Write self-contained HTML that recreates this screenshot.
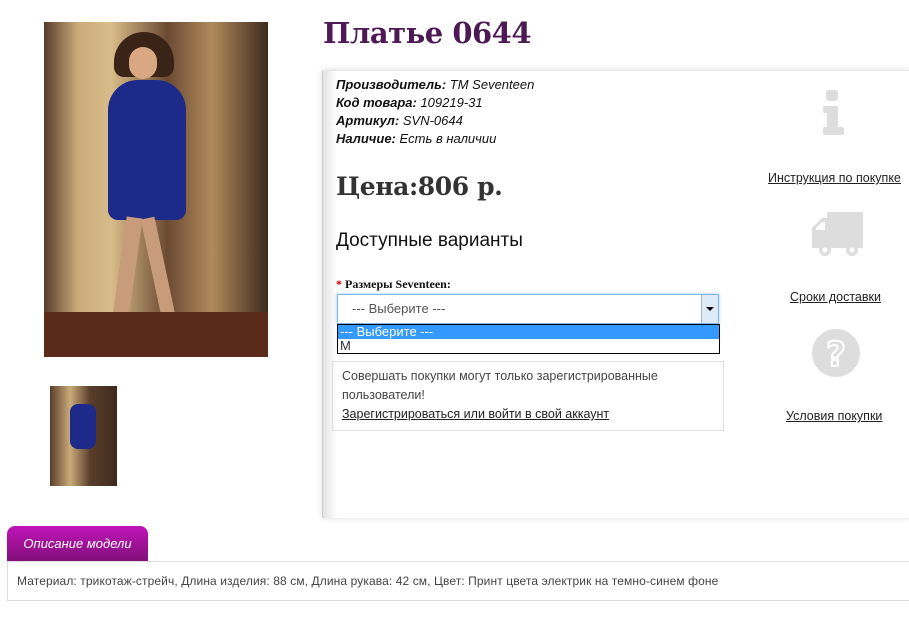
<!DOCTYPE html>
<html><head><meta charset="utf-8"><style>
body{margin:0;width:909px;height:630px;background:#fff;position:relative;overflow:hidden;font-family:"Liberation Sans","DejaVu Sans",sans-serif;color:#333}
.abs{position:absolute}
.photo{left:44px;top:22px;width:224px;height:335px;background:linear-gradient(90deg,#5a3d2a 0%,#c9ab7a 15%,#d8bd8a 30%,#6b4a32 55%,#b08a5c 75%,#3e2a1e 100%)}
.panel{left:322px;top:70px;width:587px;height:447px;background:linear-gradient(90deg,#e2e2e2 0,#fff 14px,#fff 100%);border-top:1px solid #e6e6e6;border-left:1px solid #ccc;box-shadow:0 0 6px #ddd}
.info{left:336px;top:76px;font:italic 13px/18px "Liberation Sans",sans-serif;color:#111}
.info b{font-weight:bold}
a{color:#222;text-decoration:underline}
</style></head><body>
<div class="abs photo">
 <div class="abs" style="left:70px;top:10px;width:60px;height:45px;border-radius:30px 30px 10px 10px;background:#3a2418"></div>
 <div class="abs" style="left:85px;top:25px;width:28px;height:32px;border-radius:14px;background:#d9a882"></div>
 <div class="abs" style="left:64px;top:58px;width:78px;height:140px;border-radius:30px 30px 10px 10px;background:#1e2a8a"></div>
 <div class="abs" style="left:75px;top:195px;width:16px;height:110px;background:#c89b7a;transform:rotate(8deg)"></div>
 <div class="abs" style="left:108px;top:195px;width:14px;height:110px;background:#c89b7a;transform:rotate(-12deg)"></div>
 <div class="abs" style="left:0;top:290px;width:224px;height:45px;background:#5a2a1a"></div>
</div>
<div class="abs" style="left:50px;top:386px;width:67px;height:100px;background:linear-gradient(90deg,#5a3d2a,#c9ab7a 30%,#5a3d2a 60%,#3e2a1e)"><div class="abs" style="left:20px;top:18px;width:26px;height:45px;background:#1e2a8a;border-radius:8px"></div></div>
<div class="abs" style="left:323px;top:12px;font:bold 29px/42px 'DejaVu Serif',serif;color:#4d1a55;letter-spacing:-0.5px">Платье 0644</div>
<div class="abs panel"></div>
<div class="abs info"><b>Производитель:</b> TM Seventeen<br><b>Код товара:</b> 109219-31<br><b>Артикул:</b> SVN-0644<br><b>Наличие:</b> Есть в наличии</div>
<div class="abs" style="left:336px;top:169px;font:bold 25px/36px 'DejaVu Serif',serif;color:#333;letter-spacing:-0.4px">Цена:806 р.</div>
<div class="abs" style="left:336px;top:228px;font:19px/26px 'Liberation Sans',sans-serif;color:#111">Доступные варианты</div>
<div class="abs" style="left:336px;top:276px;font:bold 12px/16px 'Liberation Serif',serif;color:#111"><span style="color:#c00">*</span> Размеры Seventeen:</div>
<div class="abs" style="left:337px;top:294px;width:380px;height:28px;border:1px solid #7eb4ea;background:#fff;box-shadow:0 0 3px #9cf"><span class="abs" style="left:14px;top:6px;font:13px 'Liberation Sans';color:#555">--- Выберите ---</span><span class="abs" style="right:0;top:0;width:16px;height:28px;background:#dde9f5;border-left:1px solid #9bc"><span class="abs" style="left:4px;top:12px;border:4px solid transparent;border-top:4px solid #000;width:0;height:0"></span></span></div>
<div class="abs" style="left:337px;top:324px;width:381px;height:28px;border:1px solid #000;background:#fff;font:13px/14px 'Liberation Sans'"><div style="background:#3399ff;color:#fff;padding-left:2px">--- Выберите ---</div><div style="padding-left:2px;color:#333">M</div></div>
<div class="abs" style="left:332px;top:361px;width:390px;height:68px;border:1px solid #ddd;font:12.5px/19px 'Liberation Sans';color:#444"><div style="padding:5px 9px">Совершать покупки могут только зарегистрированные пользователи!<br><a>Зарегистрироваться или войти в свой аккаунт</a></div></div>
<svg class="abs" style="left:822px;top:90px" width="26" height="46"><rect x="4" y="0" width="12" height="11" rx="3" fill="#ddd"/><rect x="1" y="16" width="15" height="7" rx="2" fill="#ddd"/><rect x="5" y="16" width="11" height="28" rx="2" fill="#ddd"/><rect x="1" y="37" width="21" height="8" rx="2" fill="#ddd"/></svg>
<div class="abs" style="left:768px;top:171px;font:12.5px 'Liberation Sans';white-space:nowrap"><a>Инструкция по покупке</a></div>
<svg class="abs" style="left:810px;top:212px" width="55" height="48"><rect x="17" y="0" width="36" height="36" rx="2" fill="#ddd"/><path d="M2 16l10-10h6v30H2z" fill="#ddd"/><path d="M6 16l6-6h3v8H6z" fill="#fff"/><circle cx="15" cy="38" r="6" fill="#ddd"/><circle cx="15" cy="38" r="2.5" fill="#fff"/><circle cx="42" cy="38" r="6" fill="#ddd"/><circle cx="42" cy="38" r="2.5" fill="#fff"/></svg>
<div class="abs" style="left:790px;top:290px;font:12.5px 'Liberation Sans';white-space:nowrap"><a>Сроки доставки</a></div>
<svg class="abs" style="left:811px;top:328px" width="50" height="50"><circle cx="25" cy="25" r="24" fill="#ddd"/><text x="25" y="38" text-anchor="middle" font-family="DejaVu Sans" font-weight="bold" font-size="34" fill="#ddd" stroke="#fff" stroke-width="2">?</text></svg>
<div class="abs" style="left:786px;top:409px;font:12.5px 'Liberation Sans';white-space:nowrap"><a>Условия покупки</a></div>
<div class="abs" style="left:7px;top:526px;width:141px;height:35px;border-radius:8px 8px 0 0;background:linear-gradient(#c014b8,#82107a);color:#fff;font:italic 13px/35px 'Liberation Sans',sans-serif;text-align:center">Описание модели</div>
<div class="abs" style="left:7px;top:561px;width:902px;height:38px;border:1px solid #ddd;border-right:none;font:12px/38px 'Liberation Sans';color:#444;white-space:nowrap"><span style="padding-left:9px;letter-spacing:0.1px">Материал: трикотаж-стрейч, Длина изделия: 88 см, Длина рукава: 42 см, Цвет: Принт цвета электрик на темно-синем фоне</span></div>
</body></html>
